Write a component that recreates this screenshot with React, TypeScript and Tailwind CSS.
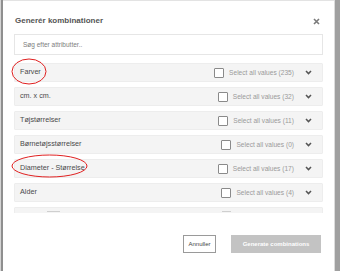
import React, { FC } from 'react';

type Attr = { name: string; count: number };

const attributes: Attr[] = [
  { name: 'Farver', count: 235 },
  { name: 'cm. x cm.', count: 32 },
  { name: 'Tøjstørrelser', count: 11 },
  { name: 'Børnetøjsstørrelser', count: 0 },
  { name: 'Diameter - Størrelse', count: 17 },
  { name: 'Alder', count: 4 },
];

const Chevron: FC = () => (
  <svg width="7" height="5" viewBox="0 0 7 5" className="shrink-0">
    <path d="M1 1 L3.5 3.6 L6 1" fill="none" stroke="#555" strokeWidth="1.5" />
  </svg>
);

const AttributeRow: FC<{ attr: Attr }> = ({ attr }) => (
  <div className="flex h-[19px] shrink-0 items-center rounded-[1px] border border-[#ededed] bg-[#f4f4f4] pl-[5px] pr-[10px]">
    <span className="flex-1 text-[7.2px] text-[#4a4a4a]">{attr.name}</span>
    <div className="flex items-center gap-[5px]">
      <span className="h-[10px] w-[10px] rounded-[1px] border border-[#8a8a8a] bg-white" />
      <span className="text-[6.6px] text-[#9a9a9a]">Select all values ({attr.count})</span>
    </div>
    <div className="ml-[11px]">
      <Chevron />
    </div>
  </div>
);

// the next row, scrolled out of view: only its top edge shows
const ClippedRow: FC = () => (
  <div className="flex h-[19px] shrink-0 items-start rounded-[1px] border border-[#ededed] bg-[#f4f4f4]">
    <span className="ml-[32px] mt-[3px] h-[1px] w-[13px] bg-[#cfcfcf]" />
    <span className="ml-[162px] mt-[3px] h-[1px] w-[9px] bg-[#cfcfcf]" />
  </div>
);

const App: FC = () => {
  return (
    <div
      className="relative flex h-[271px] w-[340px] overflow-hidden bg-[#a3a3a3]"
      style={{ fontFamily: '"Liberation Sans", Arial, sans-serif' }}
    >
      <div className="w-[1px] bg-[#d4d4d4]" />
      <div className="w-[2px] bg-[#8f8f8f]" />
      <div className="flex w-[331px] flex-col border-t border-[#e3e3e3] bg-white">
        <div className="flex items-center justify-between pl-[12px] pr-[14px] pt-[14px]">
          <span className="text-[8px] font-bold text-[#555]">Generér kombinationer</span>
          <svg width="7" height="7" viewBox="0 0 7 7">
            <path d="M1 1 L6 6 M6 1 L1 6" stroke="#7a7a7a" strokeWidth="1.6" />
          </svg>
        </div>
        <div className="mx-[11px] mt-[7px] flex h-[21px] items-center border border-[#e6e6e6] px-[8px]">
          <span className="text-[6.5px] text-[#7d7d7d]">Søg efter attributter..</span>
        </div>
        <div className="mx-[11px] mt-[8px] flex h-[150px] flex-col gap-[5px] overflow-hidden">
          {attributes.map((a) => (
            <AttributeRow key={a.name} attr={a} />
          ))}
          <ClippedRow />
        </div>
        <div className="mt-[22px] flex justify-end gap-[15px] pr-[13px]">
          <button className="flex h-[18px] w-[33px] items-center justify-center border border-[#9a9a9a] bg-white text-[6px] text-[#444]">
            Annuller
          </button>
          <button className="flex h-[18px] w-[90px] items-center justify-center bg-[#c3c3c3] text-[6px] font-bold text-white">
            Generate combinations
          </button>
        </div>
      </div>
      <div className="w-[1px] bg-[#dcdcdc]" />
      <div className="flex-1 bg-[#a0a0a0]" />

      <svg className="pointer-events-none absolute left-0 top-0" width="340" height="271">
        <ellipse cx="29" cy="71.5" rx="17" ry="12.5" fill="none" stroke="#e02020" strokeWidth="1" />
        <ellipse cx="49.5" cy="166" rx="37.5" ry="11" fill="none" stroke="#e02020" strokeWidth="1" />
      </svg>
    </div>
  );
};

export default App;
